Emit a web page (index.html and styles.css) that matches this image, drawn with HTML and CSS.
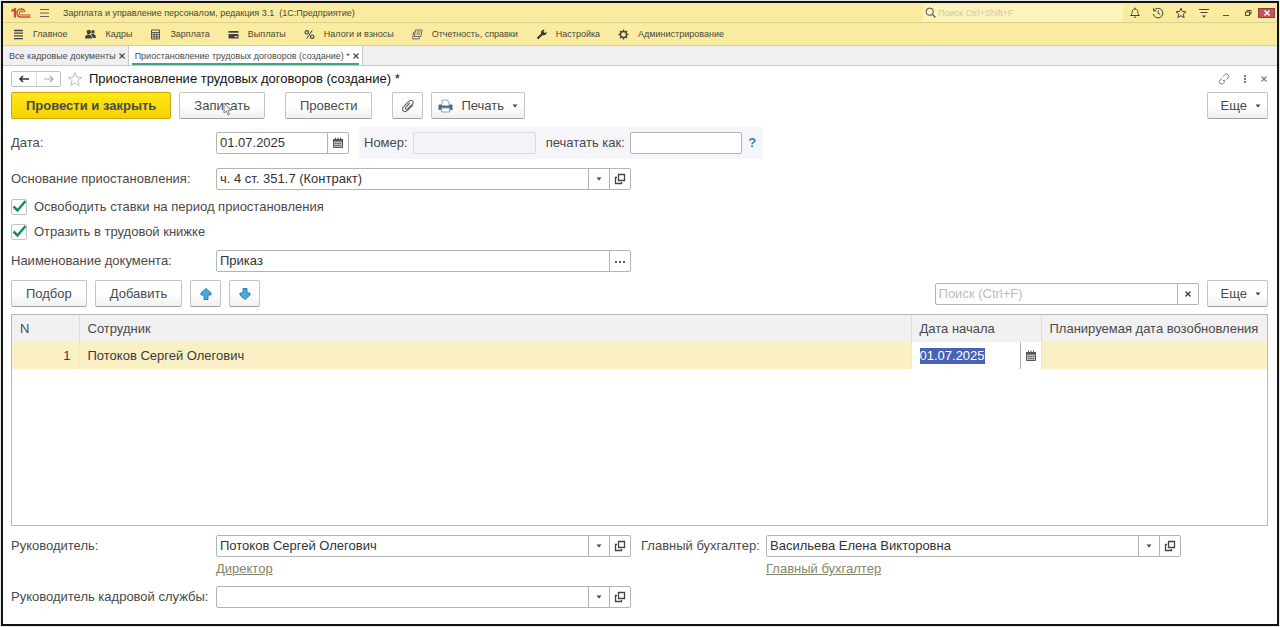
FILE: index.html
```html
<!DOCTYPE html>
<html lang="ru">

<head>
  <meta charset="UTF-8">
  <meta name="viewport" content="width=device-width, initial-scale=1.0">
  <title>Приостановление трудовых договоров (создание) *</title>
  <link rel="stylesheet" href="styles.css">
</head>

<body>
  <!-- Shared icons -->
  <svg class="sprite" width="0" height="0" aria-hidden="true">
    <symbol id="i-calendar" viewBox="0 0 12 12">
      <path d="M1.500 2.500h9v8h-9z" fill="#bbb" stroke="#555"/>
      <path d="M1 2h10v2.500H1z" fill="#555"/>
      <path d="M3.500 .5v2M6 .5v2M8.500 .5v2" stroke="#555"/>
      <path d="M3 6.500h6M3 8.500h6" stroke="#555" stroke-dasharray="1.500 .8"/>
    </symbol>
    <symbol id="i-open" viewBox="0 0 12 12">
      <path d="M4.500 1.500h6v6h-6zM3 4.500H1.500v6h6V9" fill="none" stroke="#444" stroke-width="1.300"/>
    </symbol>
    <symbol id="i-caret" viewBox="0 0 6 4">
      <path d="M.5.500h5L3 3.500z" fill="#444"/>
    </symbol>
    <symbol id="i-close" viewBox="0 0 8 8">
      <path d="M1.500 1.500l5 5M6.500 1.500l-5 5" stroke="currentColor" stroke-width="1.200"/>
    </symbol>
    <symbol id="i-arrow" viewBox="0 0 14 14">
      <path d="M7 1.500l5 4.500v2H9v4.500H5V8H2V6z" fill="#45abe0" stroke="#2f7fae" stroke-width="1" stroke-linejoin="round"/>
    </symbol>
  </svg>

  <div class="window">
    <!-- Title bar -->
    <header class="titlebar">
      <svg class="logo" width="20" height="12" viewBox="0 0 20 12">
        <path d="M.5 4L4 2.200v8.300" fill="none" stroke="#cf4a35" stroke-width="2.200"/>
        <path d="M13.800 4.700A4 4 0 1 0 10.300 10H19.500" fill="none" stroke="#cf4a35" stroke-width="1.400"/>
        <path d="M12 5.500A1.900 1.900 0 1 0 10.300 8H19.500" fill="none" stroke="#cf4a35" stroke-width="1.100"/>
      </svg>
      <button class="icon-btn" aria-label="Меню">
        <svg width="11" height="10" viewBox="0 0 11 10"><path d="M1 1.500h9M1 5h9M1 8.500h9" stroke="#666" stroke-width="1"/></svg>
      </button>
      <span class="app-name">Зарплата и управление персоналом, редакция 3.1&nbsp; (1С:Предприятие)</span>
      <label class="global-search">
        <svg width="11" height="11" viewBox="0 0 11 11"><circle cx="4.700" cy="4.700" r="3.700" fill="none" stroke="#444"/><path d="M7.400 7.400l3 3" stroke="#444" stroke-width="1.300"/></svg>
        <input type="search" placeholder="Поиск Ctrl+Shift+F" aria-label="Поиск">
      </label>
      <div class="title-tools">
        <button class="icon-btn" aria-label="Уведомления">
          <svg width="12" height="12" viewBox="0 0 12 12"><path d="M1.500 8.500C3 7.500 3 6 3.300 4.300 3.600 2.700 4.700 2 6 2s2.400.7 2.700 2.300C9 6 9 7.500 10.500 8.500zM6 .7V2M5 10.200h2" fill="none" stroke="#444"/></svg>
        </button>
        <button class="icon-btn" aria-label="История">
          <svg width="12" height="12" viewBox="0 0 12 12"><path d="M2 3.500A4.800 4.800 0 1 1 1.300 7M1.500 1.200v2.600h2.600M6.200 3.300v3l2 1.300" fill="none" stroke="#444"/></svg>
        </button>
        <button class="icon-btn" aria-label="Избранное">
          <svg width="12" height="12" viewBox="0 0 12 12"><path d="M6 1.200l1.400 3.300 3.600.3-2.700 2.300.8 3.500L6 8.700l-3.100 1.900.8-3.500L1 4.800l3.600-.3z" fill="none" stroke="#444"/></svg>
        </button>
        <button class="icon-btn" aria-label="Настройки">
          <svg width="12" height="12" viewBox="0 0 12 12"><path d="M1 2.500h10M2.500 5.500h7" stroke="#444"/><path d="M4 8.500h4L6 10.800z" fill="#444"/></svg>
        </button>
        <button class="icon-btn" aria-label="Свернуть">
          <svg width="10" height="12" viewBox="0 0 10 12"><path d="M2 8.500h6" stroke="#555"/></svg>
        </button>
      </div>
      <div class="window-tools">
        <button class="icon-btn" aria-label="Развернуть">
          <svg width="8" height="8" viewBox="0 0 8 8"><path d="M1.500 3h4v3.500h-4zM3 3V1.500h4V5H5.500" fill="none" stroke="#444"/></svg>
        </button>
        <button class="icon-btn close-window" aria-label="Закрыть">
          <svg width="8" height="8" viewBox="0 0 8 8"><path d="M1.500 1.500l5 5M6.500 1.500l-5 5" stroke="#fff" stroke-width="1.500"/></svg>
        </button>
      </div>
    </header>

    <!-- Sections -->
    <nav class="sections">
      <a href="#"><svg width="11" height="11" viewBox="0 0 11 11"><path d="M1 1.500h9M1 4.200h9M1 6.900h9M1 9.600h9" stroke="#444" stroke-width="1.300"/></svg>Главное</a>
      <a href="#"><svg width="11" height="11" viewBox="0 0 11 11"><circle cx="3.800" cy="3" r="2.200" fill="#444"/><circle cx="8" cy="2.700" r="1.700" fill="#444"/><path d="M0 9.500c0-3 1.200-4 3.500-4S7 6.500 7 9.500zM6 4.800h2.500c1.500.7 2.500 2 2.500 4.200H7.800z" fill="#444"/></svg>Кадры</a>
      <a href="#"><svg width="11" height="11" viewBox="0 0 11 11"><path d="M1.500 1h8v9h-8zM1.500 3.500h8M1.500 5.700h8M1.500 7.900h8M4.200 3.500V10M6.800 3.500V10" fill="none" stroke="#555"/></svg>Зарплата</a>
      <a href="#"><svg width="11" height="11" viewBox="0 0 11 11"><path d="M.5 2h10v1.700H.5zM.5 5h10v4.500H.5z" fill="#444"/><path d="M6.500 7.700h3" stroke="#f9eda5"/></svg>Выплаты</a>
      <a href="#"><svg width="11" height="11" viewBox="0 0 11 11"><circle cx="2.800" cy="3.300" r="1.700" fill="none" stroke="#444" stroke-width="1.200"/><circle cx="8.200" cy="7.700" r="1.700" fill="none" stroke="#444" stroke-width="1.200"/><path d="M8.300 1.300L2.700 9.700" stroke="#444"/></svg>Налоги и взносы</a>
      <a href="#"><svg width="11" height="11" viewBox="0 0 11 11"><path d="M3.500 1h6.500L8.800 7.500H2.300zM2.300 3H1.500L.7 9.900h6.500l.4-2.400M4.800 3h3.500M4.500 5h3.500" fill="none" stroke="#666"/></svg>Отчетность, справки</a>
      <a href="#"><svg width="11" height="11" viewBox="0 0 11 11"><path d="M1.500 9.500L6.300 5" stroke="#333" stroke-width="2.200"/><path d="M8.800.8L7.500 2.300l.5 1.300 1.400.4 1.200-1.500C11 5 9.500 6.300 7.300 6.200 5 6 4.500 4 5.300 2.300 6 1 7.300.4 8.800.8z" fill="#333"/></svg>Настройка</a>
      <a href="#"><svg width="11" height="11" viewBox="0 0 11 11"><circle cx="5.500" cy="5.500" r="3" fill="none" stroke="#444" stroke-width="1.400"/><path d="M5.500.5v2M5.500 8.500v2M.5 5.500h2M8.500 5.500h2M2 2l1.300 1.300M7.700 7.700L9 9M9 2L7.700 3.300M3.300 7.700L2 9" stroke="#444" stroke-width="1.400"/></svg>Администрирование</a>
    </nav>

    <!-- Open tabs -->
    <div class="tabs">
      <div class="tab">
        <a href="#">Все кадровые документы</a>
        <button class="icon-btn" aria-label="Закрыть вкладку"><svg width="8" height="8"><use href="#i-close"/></svg></button>
      </div>
      <div class="tab active">
        <a href="#">Приостановление трудовых договоров (создание) *</a>
        <button class="icon-btn" aria-label="Закрыть вкладку"><svg width="8" height="8"><use href="#i-close"/></svg></button>
      </div>
    </div>

    <main>
      <div class="form-title">
        <div class="history">
          <button aria-label="Назад"><svg width="12" height="8" viewBox="0 0 12 8"><path d="M11 4H2M5 1L2 4l3 3" fill="none" stroke="#333" stroke-width="1.500"/></svg></button>
          <button aria-label="Вперед"><svg width="12" height="8" viewBox="0 0 12 8"><path d="M1 4h9M7 1l3 3-3 3" fill="none" stroke="#aaa" stroke-width="1.200"/></svg></button>
        </div>
        <button class="icon-btn" aria-label="В избранное">
          <svg width="16" height="16" viewBox="0 0 16 16"><path d="M8 1.500l1.800 4.700 5.000.3-3.900 3.100 1.300 4.900L8 11.800l-4.200 2.700 1.300-4.900L1.200 6.500l5-.3z" fill="none" stroke="#bbb"/></svg>
        </button>
        <h1>Приостановление трудовых договоров (создание) *</h1>
        <div class="form-tools">
          <button class="icon-btn" aria-label="Ссылка"><svg width="12" height="12" viewBox="0 0 12 12"><path d="M5 3.500l1.500-1.700a2.200 2.200 0 0 1 3.500 0 2.200 2.200 0 0 1 0 3.200L8.300 6.500M4 5.500L2 7.200a2.200 2.200 0 0 0 0 3.200 2.200 2.200 0 0 0 3.200 0L7 8.700M5 7.500h2" fill="none" stroke="#777"/></svg></button>
          <button class="icon-btn" aria-label="Действия"><svg width="4" height="10" viewBox="0 0 4 10"><path d="M1 1h2v2H1zM1 4h2v2H1zM1 7h2v2H1z" fill="#777"/></svg></button>
          <button class="icon-btn" aria-label="Закрыть"><svg width="8" height="8"><use href="#i-close"/></svg></button>
        </div>
      </div>

      <!-- Form commands -->
      <div class="commands">
        <button class="btn btn-primary">Провести и закрыть</button>
        <button class="btn btn-save">Записать
          <svg class="pointer" width="9" height="14" viewBox="0 0 9 14"><path d="M1 1v10l2.300-2 1.700 4 1.500-.7-1.700-3.800H8z" fill="#fff" stroke="#666" stroke-width=".8"/></svg>
        </button>
        <button class="btn btn-post">Провести</button>
        <button class="btn btn-icon btn-attach" aria-label="Файлы">
          <svg width="16" height="14" viewBox="0 0 16 14"><path d="M13 5.800l-5.200 5.400c-1.500 1.500-3.500 1.700-4.600.7s-.9-3 .6-4.500l5-5c1.200-1.200 2.900-1.300 3.800-.5s.8 2.300-.4 3.500L7.800 9.700c-.8.8-1.700.9-2.200.4s-.4-1.300.4-2.100l3.900-4" fill="none" stroke="#666" stroke-width="1.100"/></svg>
        </button>
        <button class="btn btn-print">
          <svg width="15" height="14" viewBox="0 0 15 14"><path d="M4 5.500V1h5l2 2v2.500" fill="#fff" stroke="#8aa4b5"/><path d="M1 5.500h3v1h7v-1h3l.5 1v4.500H.5V6.500z" fill="#446f8e"/><path d="M3.500 9h8v4h-8z" fill="#fff" stroke="#8aa4b5"/></svg>
          Печать
          <svg width="6" height="4"><use href="#i-caret"/></svg>
        </button>
        <button class="btn btn-more">Еще <svg width="6" height="4"><use href="#i-caret"/></svg></button>
      </div>

      <!-- Document fields -->
      <div class="row row-date">
        <label class="caption" for="date">Дата:</label>
        <div class="field field-date">
          <input type="text" id="date" value="01.07.2025">
          <button aria-label="Календарь"><svg width="12" height="12"><use href="#i-calendar"/></svg></button>
        </div>
        <div class="number-group">
          <label for="number">Номер:</label>
          <input class="box box-number" type="text" id="number" disabled>
          <label class="print-as" for="printAs">печатать как:</label>
          <input class="box box-print" type="text" id="printAs">
          <button class="help">?</button>
        </div>
      </div>

      <div class="row row-basis">
        <label class="caption" for="basis">Основание приостановления:</label>
        <div class="field field-wide">
          <select id="basis">
            <option>ч. 4 ст. 351.7 (Контракт)</option>
          </select>
          <button aria-label="Открыть"><svg width="12" height="12"><use href="#i-open"/></svg></button>
        </div>
      </div>

      <label class="check"><input type="checkbox" checked>Освободить ставки на период приостановления</label>
      <label class="check"><input type="checkbox" checked>Отразить в трудовой книжке</label>

      <div class="row row-name">
        <label class="caption" for="docName">Наименование документа:</label>
        <div class="field field-wide">
          <input type="text" id="docName" value="Приказ">
          <button aria-label="Выбрать"><svg width="10" height="4" viewBox="0 0 10 4"><path d="M0 2h2v2H0zM4 2h2v2H4zM8 2h2v2H8z" fill="#555"/></svg></button>
        </div>
      </div>

      <!-- Employees -->
      <div class="commands list-commands">
        <button class="btn btn-pick">Подбор</button>
        <button class="btn btn-add">Добавить</button>
        <button class="btn btn-icon" aria-label="Вверх"><svg width="14" height="14"><use href="#i-arrow"/></svg></button>
        <button class="btn btn-icon" aria-label="Вниз"><svg class="down" width="14" height="14"><use href="#i-arrow"/></svg></button>
        <div class="field list-search">
          <input type="text" placeholder="Поиск (Ctrl+F)" aria-label="Поиск">
          <button aria-label="Очистить"><svg width="8" height="8"><use href="#i-close"/></svg></button>
        </div>
        <button class="btn btn-more">Еще <svg width="6" height="4"><use href="#i-caret"/></svg></button>
      </div>

      <div class="list">
        <table>
          <colgroup>
            <col class="col-n">
            <col>
            <col class="col-start">
            <col class="col-end">
          </colgroup>
          <thead>
            <tr>
              <th>N</th>
              <th>Сотрудник</th>
              <th>Дата начала</th>
              <th>Планируемая дата возобновления</th>
            </tr>
          </thead>
          <tbody>
            <tr>
              <td class="num">1</td>
              <td>Потоков Сергей Олегович</td>
              <td class="editing">
                <div class="cell-edit">
                  <input type="text" id="startDate" value="01.07.2025" aria-label="Дата начала">
                  <button aria-label="Календарь"><svg width="12" height="12"><use href="#i-calendar"/></svg></button>
                </div>
              </td>
              <td></td>
            </tr>
          </tbody>
        </table>
      </div>

      <!-- Signatures -->
      <div class="row row-sign">
        <label class="caption" for="head">Руководитель:</label>
        <div class="field field-wide">
          <select id="head">
            <option>Потоков Сергей Олегович</option>
          </select>
          <button aria-label="Открыть"><svg width="12" height="12"><use href="#i-open"/></svg></button>
        </div>
        <label class="caption-second" for="accountant">Главный бухгалтер:</label>
        <div class="field field-wide">
          <select id="accountant">
            <option>Васильева Елена Викторовна</option>
          </select>
          <button aria-label="Открыть"><svg width="12" height="12"><use href="#i-open"/></svg></button>
        </div>
      </div>
      <div class="row positions">
        <div class="position"><a href="#">Директор</a></div>
        <div class="position"><a href="#">Главный бухгалтер</a></div>
      </div>
      <div class="row row-hr">
        <label class="caption" for="hr">Руководитель кадровой службы:</label>
        <div class="field field-wide">
          <select id="hr">
            <option></option>
          </select>
          <button aria-label="Открыть"><svg width="12" height="12"><use href="#i-open"/></svg></button>
        </div>
      </div>
    </main>
  </div>

  <script>
    // The date cell opens in edit mode with its text selected
    const startDate = document.getElementById("startDate");
    startDate.focus();
    startDate.select();
  </script>
</body>

</html>
```
FILE: styles.css
```css
/* General Styles */
* {
  box-sizing: border-box;
}

body {
  margin: 0;
  padding: 1px;
  background-color: #e8e8e8;
  font-family: "Liberation Sans", Arial, sans-serif;
  font-size: 13px;
  line-height: 16px;
  color: #4a4a4a;
}

button,
input,
select {
  font: inherit;
  color: inherit;
  margin: 0;
}

button {
  padding: 0;
  border: none;
  background: none;
  cursor: pointer;
}

input:focus,
select:focus {
  outline: none;
}

svg {
  flex: none;
}

.sprite {
  position: absolute;
}

.window {
  display: flex;
  flex-direction: column;
  min-height: calc(100vh - 2px);
  border: 2px solid #111;
  background-color: #fff;
}

.icon-btn {
  display: flex;
  align-items: center;
  justify-content: center;
}

/* Title bar */
.titlebar {
  display: flex;
  align-items: center;
  height: 20px;
  padding: 0 2px 0 8px;
  background-color: #f9eb9f;
  border-bottom: 1px solid #dccf8c;
  font-size: 9px;
  color: #4a4a3a;
}

.logo {
  margin-right: 8px;
}

.app-name {
  margin-left: 13px;
}

.global-search {
  display: flex;
  align-items: center;
  gap: 2px;
  width: 200px;
  height: 18px;
  margin-left: auto;
  padding-left: 2px;
  background-color: #fcf3bd;
}

.global-search input {
  flex: 1;
  min-width: 0;
  padding: 0;
  border: none;
  background: none;
}

.global-search input::placeholder {
  color: #cfc8a4;
}

.title-tools {
  display: flex;
  gap: 11px;
  margin: 0 13px 0 6px;
}

.window-tools {
  display: flex;
  align-items: center;
  gap: 6px;
}

.close-window {
  width: 17px;
  height: 10px;
  border: 1px solid #8c4040;
  background-color: #c5525a;
}

/* Sections */
.sections {
  display: flex;
  align-items: center;
  gap: 18px;
  height: 23px;
  padding-left: 10px;
  background-color: #f9eb9f;
  border-bottom: 1px solid #dccf8c;
  font-size: 9px;
}

.sections a {
  display: flex;
  align-items: center;
  gap: 9px;
  color: #4a4a3a;
  text-decoration: none;
}

/* Tabs */
.tabs {
  display: flex;
  height: 20px;
  background-color: #f0f0f0;
  border-bottom: 1px solid #c8c8c8;
  font-size: 9px;
}

.tab {
  display: flex;
  align-items: center;
  gap: 2px;
  padding: 0 2px 0 6px;
  border-right: 1px solid #c8c8c8;
}

.tab a {
  color: #4a4a4a;
  text-decoration: none;
}

.tab.active {
  background: linear-gradient(#3fa57b, #3fa57b) center bottom / calc(100% - 6px) 2px no-repeat #fff;
}

/* Form */
main {
  display: flex;
  flex: 1;
  flex-direction: column;
  padding: 4px 9px 16px 8px;
}

.form-title {
  display: flex;
  align-items: center;
  gap: 6px;
  height: 18px;
}

.history {
  display: flex;
  height: 16px;
  border: 1px solid #c0c0c0;
  border-radius: 2px;
}

.history button {
  display: flex;
  align-items: center;
  justify-content: center;
  width: 24px;
}

.history button + button {
  border-left: 1px solid #ddd;
}

.form-title h1 {
  margin: 0;
  font-size: 13px;
  font-weight: 400;
  color: #111;
}

.form-tools {
  display: flex;
  align-items: center;
  gap: 13px;
  margin-left: auto;
  color: #777;
}

/* Buttons */
.commands {
  display: flex;
  align-items: center;
  gap: 8px;
  margin-top: 4px;
}

.btn {
  display: flex;
  align-items: center;
  justify-content: center;
  position: relative;
  height: 27px;
  padding: 0 14px;
  border: 1px solid #c4c4c4;
  border-bottom-color: #a0a0a0;
  border-radius: 2px;
  background: linear-gradient(#fff 50%, #f0f0f0);
}

.btn-primary {
  border-color: #c9a800;
  background: linear-gradient(#ffe81a, #f5d200);
  font-weight: 700;
}

.btn-post {
  margin-left: 12px;
}

.btn-icon {
  width: 31px;
  padding: 0;
}

.btn-attach {
  margin-left: 12px;
}

.btn-print {
  gap: 8px;
  padding: 0 6px;
}

.btn-more {
  gap: 8px;
  margin-left: auto;
  padding: 0 6px 0 13px;
}

.down {
  transform: rotate(180deg);
}

.pointer {
  position: absolute;
  left: 43px;
  top: 9px;
}

/* Fields */
.row {
  display: flex;
  align-items: center;
}

.caption {
  width: 205px;
  white-space: nowrap;
}

.field {
  display: flex;
  height: 22px;
  border: 1px solid #b4b4b4;
  border-radius: 2px;
  background-color: #fff;
  color: #333;
}

.field input,
.field select {
  flex: 1;
  min-width: 0;
  padding: 0 3px;
  border: none;
  background-color: transparent;
}

.field select {
  appearance: none;
  background-image: linear-gradient(#b4b4b4, #b4b4b4), url("data:image/svg+xml,%3Csvg xmlns='http://www.w3.org/2000/svg' width='6' height='4'%3E%3Cpath d='M.5.5h5L3 3.500z' fill='%23444'/%3E%3C/svg%3E");
  background-position: right 20px top, right 7px center;
  background-size: 1px 100%, 6px 4px;
  background-repeat: no-repeat;
}

.field button,
.cell-edit button {
  display: flex;
  align-items: center;
  justify-content: center;
  width: 21px;
  border-left: 1px solid #b4b4b4;
}

.field ::placeholder {
  color: #bbb;
}

.field-date {
  width: 133px;
}

.field-wide {
  width: 415px;
}

.row-date {
  margin-top: 8px;
}

.number-group {
  display: flex;
  align-items: center;
  gap: 5px;
  height: 32px;
  margin-left: 10px;
  padding: 0 5px;
  background-color: #f6f6fa;
}

.box {
  height: 22px;
  border: 1px solid #b4b4b4;
  border-radius: 2px;
  background-color: #fff;
}

.box-number {
  width: 123px;
  border-color: #dcdce2;
  background-color: #f4f4f8;
}

.box-print {
  width: 112px;
}

.print-as {
  margin-left: 5px;
}

.help {
  width: 11px;
  font-weight: 700;
  color: #2f8aa5;
}

.row-basis {
  margin-top: 9px;
}

.check {
  display: flex;
  align-items: center;
  gap: 7px;
  height: 16px;
  margin-top: 9px;
}

.check input {
  appearance: none;
  width: 16px;
  height: 16px;
  border: 1px solid #c4c4c4;
  border-radius: 2px;
  background: url("data:image/svg+xml,%3Csvg xmlns='http://www.w3.org/2000/svg' width='14' height='14'%3E%3Cpath d='M1.500 6.500l4 4L13.500 1' fill='none' stroke='%23129257' stroke-width='2.500'/%3E%3C/svg%3E") center no-repeat #fff;
}

.row-name {
  margin-top: 10px;
}

/* Employees list */
.list-commands {
  margin-top: 8px;
}

.list-search {
  width: 264px;
  margin-left: auto;
}

.list-search + .btn-more {
  margin-left: 0;
}

.list {
  flex: 1;
  min-height: 120px;
  margin-top: 7px;
  border: 1px solid #b8b8b8;
}

.list table {
  width: 100%;
  border-collapse: collapse;
  table-layout: fixed;
}

.col-n {
  width: 67px;
}

.col-start {
  width: 130px;
}

.col-end {
  width: 226px;
}

.list th,
.list td {
  height: 27px;
  padding: 0 8px;
  text-align: left;
  font-weight: 400;
  white-space: nowrap;
}

.list th {
  background-color: #f1f1f1;
}

.list th + th {
  border-left: 1px solid #ddd;
}

.list td {
  background-color: #fbefc5;
  color: #3a3a3a;
}

.list td + td {
  border-left: 1px solid #f4e8bd;
}

.list .num {
  text-align: right;
}

.list .editing {
  padding: 0;
  background-color: #fff;
}

.cell-edit {
  display: flex;
  height: 27px;
}

.cell-edit input {
  flex: 1;
  min-width: 0;
  padding: 0 8px;
  border: none;
  background: none;
}

.cell-edit input::selection {
  background-color: #4a62b3;
  color: #fff;
}

/* Signatures */
.row-sign {
  margin-top: 9px;
}

.caption-second {
  width: 135px;
  padding-left: 10px;
  white-space: nowrap;
}

.positions {
  margin-top: 4px;
  padding-left: 205px;
}

.position {
  flex: none;
  width: 550px;
}

.position:last-child {
  width: auto;
}

.position a {
  color: #85856a;
}

.row-hr {
  margin-top: 9px;
}
```
